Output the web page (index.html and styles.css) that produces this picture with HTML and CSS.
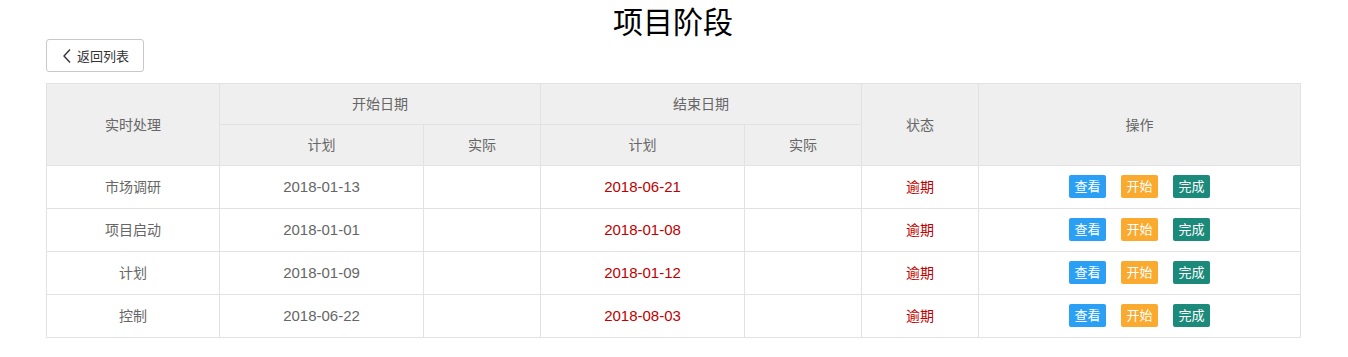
FILE: index.html
```html
<!DOCTYPE html>
<html lang="zh-CN">
<head>
<meta charset="utf-8">
<title>项目阶段</title>
<link rel="stylesheet" href="styles.css">
</head>
<body>
<div class="page">
  <h1 class="title">项目阶段</h1>
  <div class="toolbar">
    <button class="back-btn"><svg class="chev" width="10" height="16" viewBox="0 0 10 16"><path d="M8 1.5 L2 8 L8 14.5" fill="none" stroke="#333" stroke-width="1.4"/></svg>返回列表</button>
  </div>
  <table class="grid">
    <colgroup>
      <col style="width:173px"><col style="width:204px"><col style="width:117px"><col style="width:204px"><col style="width:117px"><col style="width:117px"><col style="width:322px">
    </colgroup>
    <thead>
      <tr class="h1">
        <th rowspan="2">实时处理</th>
        <th colspan="2">开始日期</th>
        <th colspan="2">结束日期</th>
        <th rowspan="2">状态</th>
        <th rowspan="2">操作</th>
      </tr>
      <tr class="h2">
        <th>计划</th><th>实际</th><th>计划</th><th>实际</th>
      </tr>
    </thead>
    <tbody>
      <tr>
        <td>市场调研</td><td class="date">2018-01-13</td><td></td><td class="date red">2018-06-21</td><td></td><td class="red">逾期</td>
        <td><div class="ops"><span class="op blue">查看</span><span class="op orange">开始</span><span class="op green">完成</span></div></td>
      </tr>
      <tr>
        <td>项目启动</td><td class="date">2018-01-01</td><td></td><td class="date red">2018-01-08</td><td></td><td class="red">逾期</td>
        <td><div class="ops"><span class="op blue">查看</span><span class="op orange">开始</span><span class="op green">完成</span></div></td>
      </tr>
      <tr>
        <td>计划</td><td class="date">2018-01-09</td><td></td><td class="date red">2018-01-12</td><td></td><td class="red">逾期</td>
        <td><div class="ops"><span class="op blue">查看</span><span class="op orange">开始</span><span class="op green">完成</span></div></td>
      </tr>
      <tr>
        <td>控制</td><td class="date">2018-06-22</td><td></td><td class="date red">2018-08-03</td><td></td><td class="red">逾期</td>
        <td><div class="ops"><span class="op blue">查看</span><span class="op orange">开始</span><span class="op green">完成</span></div></td>
      </tr>
    </tbody>
  </table>
</div>
</body>
</html>
```
FILE: styles.css
```css
html, body {
  margin: 0;
  padding: 0;
  background: #fff;
}
body {
  font-family: "Noto Sans CJK SC", "Liberation Sans", sans-serif;
  color: #666;
}
.page {
  padding: 0 48px 0 46px;
}
.title {
  margin: 0;
  height: 39px;
  line-height: 40px;
  font-size: 30px;
  font-weight: normal;
  color: #000;
  text-align: center;
}
.toolbar {
  display: flex;
  height: 44px;
  align-items: flex-start;
}
.back-btn {
  display: flex;
  align-items: center;
  gap: 5px;
  height: 33px;
  width: 98px;
  padding: 0 0 0 15px;
  background: #fff;
  border: 1px solid #c8c8c8;
  border-radius: 3px;
  font-family: "Noto Sans CJK SC", sans-serif;
  font-size: 13px;
  color: #333;
}
.chev {
  display: block;
}
.grid {
  width: 1254px;
  border-collapse: collapse;
  table-layout: fixed;
  font-size: 14px;
}
.grid th, .grid td {
  border: 1px solid #e2e2e2;
  text-align: center;
  padding: 0 0 2px 0;
  font-weight: normal;
}
.grid thead th {
  background: #efefef;
  color: #666;
  height: 38px;
}
.grid tbody td {
  height: 40px;
  color: #666;
}
.grid td.date {
  font-family: "Liberation Sans", sans-serif;
  font-size: 15px;
}
.grid td.red {
  color: #c00000;
}
.ops {
  display: flex;
  justify-content: center;
  gap: 15px;
}
.op {
  display: inline-block;
  width: 37px;
  height: 23px;
  line-height: 22px;
  border-radius: 2px;
  color: #fff;
  font-size: 13px;
  text-align: center;
}
.op.blue { background: #2b9ff3; }
.op.orange { background: #f9aa2f; }
.op.green { background: #1b8a7a; }
```
